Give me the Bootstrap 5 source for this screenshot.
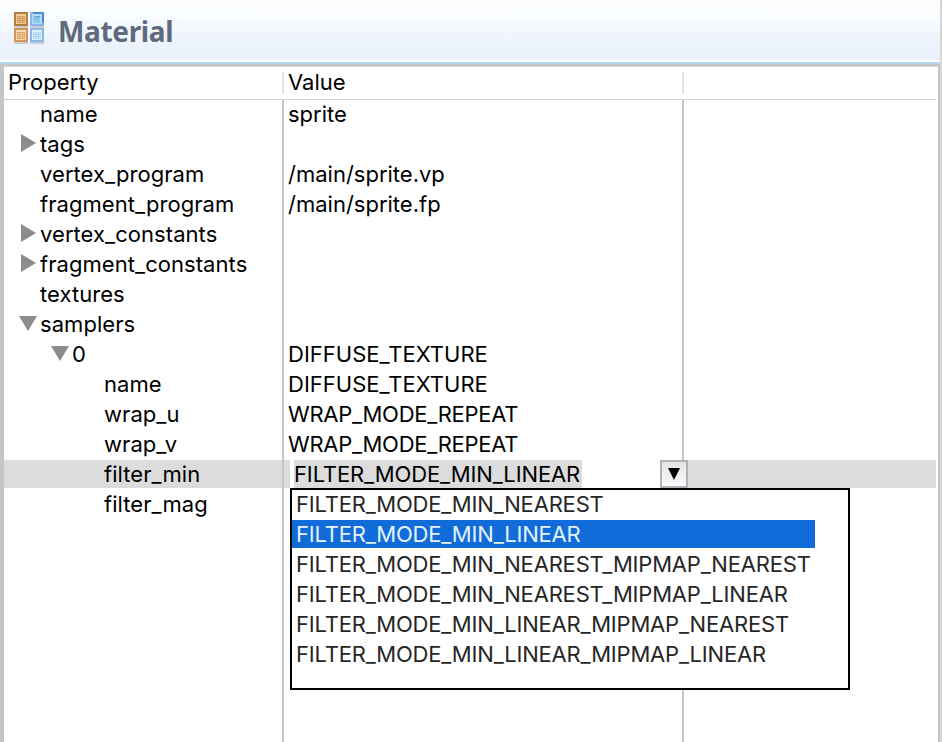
<!DOCTYPE html>
<html lang="en">
<head>
<meta charset="utf-8">
<meta name="viewport" content="width=device-width, initial-scale=1">
<title>Material</title>
<link href="https://cdn.jsdelivr.net/npm/bootstrap@5.3.0/dist/css/bootstrap.min.css" rel="stylesheet">
<script src="https://cdn.jsdelivr.net/npm/bootstrap@5.3.0/dist/js/bootstrap.bundle.min.js" defer></script>
<style>
body{font-family:Inter,"Liberation Sans",sans-serif;font-size:22px;line-height:28px;color:#000;height:742px;border-right:2px solid #d6d6d6;white-space:nowrap}
.form-head{height:64px;padding:0 0 0 13px;background:linear-gradient(#fff 0,#f6faff 22px,#edf3fc 42px,#e8f0fb 60px);border-bottom:2px solid #b5d6ef;box-shadow:inset 0 -2px #f8fdfd}
.form-title{font:700 28px/40px "Noto Sans",sans-serif;letter-spacing:-.35px;color:#5f6b7c;margin:11px 0 0 13px}
.tree{border:solid #c6c6c6;border-width:2px 2px 0 4px;box-shadow:inset 0 1px #dcdcdc}
.tree-head{height:34px;margin-right:2px;border-bottom:1px solid #d2d2d2;padding-top:2px}
.col-a{width:280px;border-right:2px solid #c6c6c6;letter-spacing:.06px}
.col-b{width:400px;border-right:2px solid #c6c6c6;padding-left:4px}
.tree-head .col-a,.tree-head .col-b{height:22px;margin-top:4px;line-height:21px;border-color:#e2e2e2}
.tree-head .col-a{padding-left:4px}
.tree-body>.line{height:30px;margin-right:2px}
.label{padding-left:36px}
.l1 .label{padding-left:68px}
.l2 .label{padding-left:100px}
.twisty{position:absolute;left:16px;top:4px;fill:#8c8c8c}
.twisty.open{left:15px;top:6px}
.l1 .twisty{left:47px}
.selected{background:linear-gradient(#dcdcdc 28px,transparent 28px)}
.wrap-mode{letter-spacing:-.27px}
.editor{position:absolute;left:6px;top:0;width:398px;height:28px;background:#fff}
.editor-text{background:#dcdcdc;margin-left:4px;width:288px;height:28px;letter-spacing:-.12px}
.drop{width:28px;height:28px;border:2px solid #b2b2b2;background:linear-gradient(#e4e4e4,#f8fbff)}
.menu-list{position:absolute;left:6px;top:28px;width:560px;height:202px;border:2px solid #000;background:#fff;color:#262626;z-index:5;letter-spacing:-.19px}
.menu-list div{height:28px;margin-bottom:2px;padding-left:4px;width:523px}
.menu-list .picked{background:#116cd9;color:#e3f3fc}
</style>
</head>
<body class="d-flex flex-column overflow-hidden bg-white">
<header class="form-head d-flex align-items-start flex-shrink-0">
<svg style="margin-top:12px" width="32" height="32" viewBox="0 0 32 32" shape-rendering="crispEdges">
<path fill="#c9ced6" d="M1 14h14v2H1zM17 14h14v2H17zM1 30h14v2H1zM17 30h14v2H17z"/>
<path fill="#b07f3d" d="M1 0h14v14H1z"/><path fill="#edcd98" d="M3 2h10v10H3z"/><path fill="#d3a066" d="M4 4h8v7H4z"/><path fill="#dfae73" d="M5 5h6v5H5z"/><path fill="#b5824a" d="M6 6h1v1H6zM9 6h1v1H9zM6 8h1v1H6zM9 8h1v1H9z"/>
<path fill="#8ab4e8" d="M17 0h14v14H17z"/><path fill="#4c8ed6" d="M20 0h11v2H20zM29 2h2v9H29z"/><path fill="#b0dcf8" d="M19 2h10v10H19z"/><path fill="#91c6f0" d="M20 4h7v7H20z"/><path fill="#5b9fdd" d="M22 4h5v1H22zM22 6h1v1H22zM25 6h1v1H25z"/>
<path fill="#d6955c" d="M1 16h14v14H1z"/><path fill="#f6deae" d="M3 18h10v10H3z"/><path fill="#e0a568" d="M4 20h8v7H4z"/><path fill="#efc089" d="M5 21h6v5H5z"/><path fill="#c88a50" d="M6 22h1v1H6zM9 22h1v1H9zM6 24h1v1H6zM9 24h1v1H9z"/>
<path fill="#91b6ea" d="M17 16h14v14H17z"/><path fill="#d8f0ff" d="M19 18h10v10H19z"/><path fill="#b9dbfa" d="M20 20h8v7H20z"/><path fill="#c5e4fd" d="M21 21h6v5H21z"/><path fill="#77a9e2" d="M22 22h1v1H22zM25 22h1v1H25zM22 24h1v1H22zM25 24h1v1H25z"/>
</svg>
<h1 class="form-title"><span>Material</span></h1>
</header>
<main class="tree flex-grow-1 d-flex flex-column">
<div class="tree-head d-flex flex-shrink-0"><div class="col-a"><span>Property</span></div><div class="col-b"><span>Value</span></div></div>
<div class="tree-body flex-grow-1 d-flex flex-column">
<div class="line d-flex"><div class="col-a label"><span>name</span></div><div class="col-b"><span>sprite</span></div></div>
<div class="line d-flex"><div class="col-a label position-relative"><svg class="twisty" width="16" height="18"><path d="M1 0 16 9 1 18z"/></svg><span>tags</span></div><div class="col-b"></div></div>
<div class="line d-flex"><div class="col-a label"><span>vertex_program</span></div><div class="col-b"><span>/main/sprite.vp</span></div></div>
<div class="line d-flex"><div class="col-a label"><span>fragment_program</span></div><div class="col-b"><span>/main/sprite.fp</span></div></div>
<div class="line d-flex"><div class="col-a label position-relative"><svg class="twisty" width="16" height="18"><path d="M1 0 16 9 1 18z"/></svg><span>vertex_constants</span></div><div class="col-b"></div></div>
<div class="line d-flex"><div class="col-a label position-relative"><svg class="twisty" width="16" height="18"><path d="M1 0 16 9 1 18z"/></svg><span>fragment_constants</span></div><div class="col-b"></div></div>
<div class="line d-flex"><div class="col-a label"><span>textures</span></div><div class="col-b"></div></div>
<div class="line d-flex"><div class="col-a label position-relative"><svg class="twisty open" width="18" height="15"><path d="M0 0H18L9 15z"/></svg><span>samplers</span></div><div class="col-b"></div></div>
<div class="line d-flex l1"><div class="col-a label position-relative"><svg class="twisty open" width="18" height="15"><path d="M0 0H18L9 15z"/></svg><span>0</span></div><div class="col-b"><span>DIFFUSE_TEXTURE</span></div></div>
<div class="line d-flex l2"><div class="col-a label"><span>name</span></div><div class="col-b"><span>DIFFUSE_TEXTURE</span></div></div>
<div class="line d-flex l2"><div class="col-a label"><span>wrap_u</span></div><div class="col-b wrap-mode"><span>WRAP_MODE_REPEAT</span></div></div>
<div class="line d-flex l2"><div class="col-a label"><span>wrap_v</span></div><div class="col-b wrap-mode"><span>WRAP_MODE_REPEAT</span></div></div>
<div class="line d-flex l2 selected"><div class="col-a label"><span>filter_min</span></div><div class="col-b position-relative">
<div class="editor d-flex justify-content-between"><div class="editor-text"><span>FILTER_MODE_MIN_LINEAR</span></div><div class="drop d-flex"><svg width="24" height="24"><path d="M6 6H18L12 18z"/></svg></div></div>
<div class="menu-list"><div><span>FILTER_MODE_MIN_NEAREST</span></div><div class="picked"><span>FILTER_MODE_MIN_LINEAR</span></div><div><span>FILTER_MODE_MIN_NEAREST_MIPMAP_NEAREST</span></div><div><span>FILTER_MODE_MIN_NEAREST_MIPMAP_LINEAR</span></div><div><span>FILTER_MODE_MIN_LINEAR_MIPMAP_NEAREST</span></div><div><span>FILTER_MODE_MIN_LINEAR_MIPMAP_LINEAR</span></div></div>
</div></div>
<div class="line d-flex l2"><div class="col-a label"><span>filter_mag</span></div><div class="col-b"></div></div>
<div class="d-flex flex-grow-1"><div class="col-a"></div><div class="col-b"></div></div>
</div>
</main>
</body>
</html>
